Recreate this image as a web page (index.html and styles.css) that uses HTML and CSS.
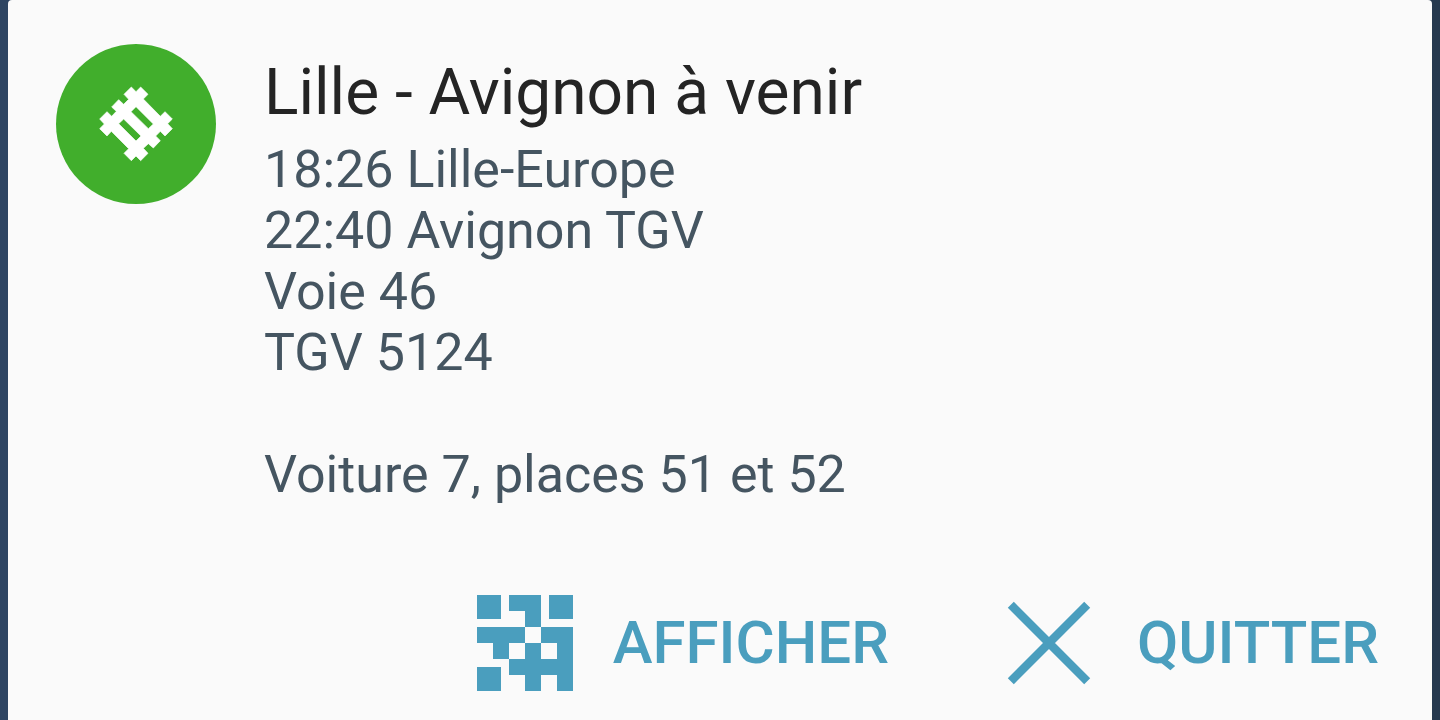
FILE: index.html
```html
<!DOCTYPE html>
<html lang="fr">
<head>
<meta charset="utf-8">
<meta name="viewport" content="width=device-width, initial-scale=1">
<title>Lille - Avignon à venir</title>
<link rel="stylesheet" href="styles.css">
</head>
<body>
<main class="card">
  <div class="notification">
    <div class="badge">
      <svg class="rail-icon" viewBox="0 0 276 276" aria-hidden="true">
        <path fill-rule="evenodd" d="M124 27 138 41 152 27 174 49 160 63 211 115 225 101 247 123 233 137 247 152 225 174 211 160 197 174 211 188 190 210 175 197 160 211 174 226 152 248 138 234 124 248 102 226 116 212 64 160 51 174 29 152 43 138 29 123 51 101 65 115 79 100 65 87 86 65 101 79 116 64 102 49ZM138 86 123 101 175 152 190 138ZM101 123 86 137 138 189 153 174Z"/>
      </svg>
    </div>
    <div class="content">
      <h1 class="title">Lille - Avignon à venir</h1>
      <p class="details">18:26 Lille-Europe<br>22:40 Avignon TGV<br>Voie 46<br>TGV 5124</p>
      <p class="details seats">Voiture 7, places 51 et 52</p>
    </div>
  </div>
  <div class="actions">
    <button class="action" type="button">
      <svg class="action-icon" viewBox="0 0 96 96" aria-hidden="true">
        <path fill="currentColor" d="M0 0H24V24H0ZM32 0H64V32H48V16H32ZM72 0H96V24H72ZM0 32H48V48H32V64H48V48H64V64H80V48H64V32H96V96H80V80H64V96H48V80H32V64H16V48H0ZM0 72H24V96H0Z"/>
      </svg>
      <span>AFFICHER</span>
    </button>
    <button class="action" type="button">
      <svg class="action-icon" viewBox="0 0 96 96" aria-hidden="true">
        <path fill="none" stroke="currentColor" stroke-width="8.5" d="M9.8 9.8 86.2 86.2M86.2 9.8 9.8 86.2"/>
      </svg>
      <span>QUITTER</span>
    </button>
  </div>
</main>
</body>
</html>
```
FILE: styles.css
```css
* {
  box-sizing: border-box;
}

body {
  margin: 0;
  padding: 0 8px;
  min-height: 100vh;
  background: linear-gradient(to right, #2e4562, #26394f);
  font-family: Roboto, "Noto Sans", sans-serif;
}

.card {
  min-height: 100vh;
  padding: 44px 53px 29px 48px;
  border-radius: 4px 4px 0 0;
  background: #fafafa;
}

.notification {
  display: flex;
  align-items: flex-start;
  gap: 48px;
}

.badge {
  display: flex;
  flex: none;
  align-items: center;
  justify-content: center;
  width: 160px;
  height: 160px;
  border-radius: 50%;
  background: #41ae2c;
}

.rail-icon {
  width: 92px;
  height: 92px;
  fill: #fff;
  stroke: #fff;
  stroke-width: 2;
}

.content {
  padding-top: 11px;
}

.title {
  margin: 0 0 8px;
  color: #242424;
  font-size: 64px;
  font-weight: 400;
  line-height: 76px;
}

.details {
  margin: 0;
  color: #455561;
  font-size: 52px;
  line-height: 61px;
}

.seats {
  margin-top: 61px;
}

.actions {
  display: flex;
  justify-content: flex-end;
  gap: 112px;
  margin-top: 90px;
}

.action {
  display: flex;
  align-items: center;
  gap: 40px;
  padding: 0;
  border: 0;
  background: none;
  color: #4a9ebe;
  font: 500 60px/72px Roboto, "Noto Sans", sans-serif;
  cursor: pointer;
}

.action-icon {
  flex: none;
  width: 96px;
  height: 96px;
}
```
